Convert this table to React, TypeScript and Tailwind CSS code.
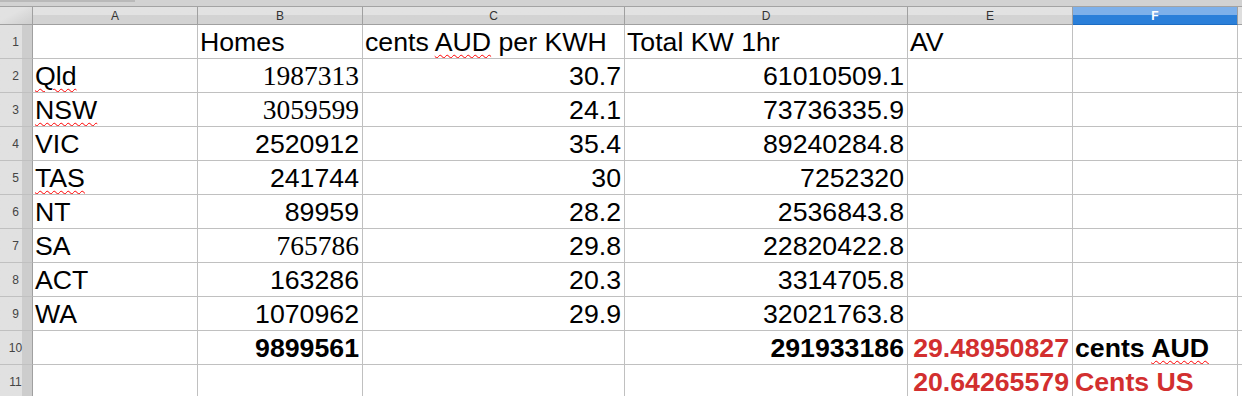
type Cell = {
  text?: string;
  align?: 'left' | 'right';
  serif?: boolean;
  bold?: boolean;
  red?: boolean;
  squiggle?: string; // word within text to underline
};

const columns = ['A', 'B', 'C', 'D', 'E', 'F'];

const L = (text: string, squiggle?: string): Cell => ({ text, align: 'left', squiggle });
const R = (text: string, extra: Partial<Cell> = {}): Cell => ({ text, align: 'right', ...extra });

const rows: Cell[][] = [
  [{}, L('Homes'), L('cents AUD per KWH', 'AUD'), L('Total KW 1hr'), L('AV'), {}],
  [L('Qld', 'Qld'), R('1987313', { serif: true }), R('30.7'), R('61010509.1'), {}, {}],
  [L('NSW', 'NSW'), R('3059599', { serif: true }), R('24.1'), R('73736335.9'), {}, {}],
  [L('VIC'), R('2520912'), R('35.4'), R('89240284.8'), {}, {}],
  [L('TAS', 'TAS'), R('241744'), R('30'), R('7252320'), {}, {}],
  [L('NT'), R('89959'), R('28.2'), R('2536843.8'), {}, {}],
  [L('SA'), R('765786', { serif: true }), R('29.8'), R('22820422.8'), {}, {}],
  [L('ACT'), R('163286'), R('20.3'), R('3314705.8'), {}, {}],
  [L('WA'), R('1070962'), R('29.9'), R('32021763.8'), {}, {}],
  [
    {},
    R('9899561', { bold: true }),
    {},
    R('291933186', { bold: true }),
    R('29.48950827', { bold: true, red: true }),
    { text: 'cents AUD', align: 'left', bold: true, squiggle: 'AUD' },
  ],
  [
    {},
    {},
    {},
    {},
    R('20.64265579', { bold: true, red: true }),
    { text: 'Cents US', align: 'left', bold: true, red: true },
  ],
];

function CellText({ cell }: { cell: Cell }) {
  if (!cell.text) return null;
  if (!cell.squiggle) return <span>{cell.text}</span>;
  const i = cell.text.indexOf(cell.squiggle);
  return (
    <span className="whitespace-pre">
      {cell.text.slice(0, i)}
      <span className="underline decoration-wavy decoration-[#ff0000] decoration-1 underline-offset-[3px]">
        {cell.squiggle}
      </span>
      {cell.text.slice(i + cell.squiggle.length)}
    </span>
  );
}

export default function App() {
  return (
    <div className="w-[1242px] h-[396px] overflow-hidden bg-white font-['Liberation_Sans',Arial,sans-serif]">
      {/* Top toolbar strip */}
      <div className="h-[7px] bg-[#d2d2d2] border-b border-[#a3a3a3] flex">
        <div className="w-[135px] h-[2px] bg-[#b9b9b9]" />
      </div>

      <div className="grid grid-cols-[33px_165px_165px_262px_283px_165px_165px_1fr]">
        {/* Column header row */}
        <div className="h-[18px] border-r border-b border-[#a0a0a0] bg-linear-to-br from-[#e2e2e2] from-40% to-[#cdcdcd]" />
        {columns.map((c) =>
          c === 'F' ? (
            <div
              key={c}
              className="h-[18px] border-r border-b border-[#a0a0a0] border-b-[#1c6cc2] bg-linear-to-b from-[#7db0ea] from-45% to-[#2a7fd9] to-45% flex items-center justify-center text-[12px] font-bold text-white"
            >
              {c}
            </div>
          ) : (
            <div
              key={c}
              className="h-[18px] border-r border-b border-[#a0a0a0] bg-linear-to-b from-[#e2e2e2] from-45% to-[#d3d3d3] to-45% flex items-center justify-center text-[12px] text-[#333]"
            >
              {c}
            </div>
          )
        )}
        <div className="h-[18px] border-b border-[#a0a0a0] bg-[#dedede]" />

        {/* Data rows */}
        {rows.map((row, r) => (
          <div key={r} className="contents">
            <div className="h-[34px] border-r border-b border-r-[#a0a0a0] border-b-[#c0c0c0] bg-linear-to-r from-[#e1e1e1] from-70% to-[#cdcdcd] to-70% flex items-center justify-center pr-[1px] text-[12px] text-[#444]">
              {r + 1}
            </div>
            {row.map((cell, c) => (
              <div
                key={c}
                className={`h-[34px] border-r border-b border-[#c0c0c0] flex items-end overflow-hidden whitespace-nowrap leading-[30px] pb-[1px] ${
                  cell.align === 'right' ? 'justify-end pr-[3px]' : 'justify-start pl-[2px]'
                } ${cell.serif ? "font-['Liberation_Serif',serif] text-[27.5px]" : 'text-[26.7px]'} ${
                  cell.bold ? 'font-bold' : ''
                } ${cell.red ? 'text-[#d22f2f]' : 'text-black'}`}
              >
                <CellText cell={cell} />
              </div>
            ))}
            <div className="h-[34px] border-b border-[#c0c0c0]" />
          </div>
        ))}
      </div>
    </div>
  );
}
